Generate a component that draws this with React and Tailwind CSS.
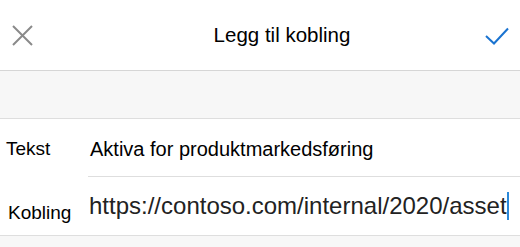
export default function App() {
  return (
    <div className="w-[520px] h-[247px] bg-[#f7f7f7] overflow-hidden" style={{ fontFamily: '"Liberation Sans", Arial, sans-serif' }}>
      <div className="h-[71px] bg-white flex items-center justify-between border-b border-[#d6d6d6] pl-[12px] pr-[11px]">
        <svg width="21" height="21" viewBox="0 0 21 21" className="mt-[1px]">
          <path d="M1 1L20 20M20 1L1 20" stroke="#8a8a8a" strokeWidth="2" fill="none" />
        </svg>
        <div className="text-[20.5px] text-black leading-none ml-[46px]">Legg til kobling</div>
        <svg width="24" height="18" viewBox="0 0 24 18" className="mt-[2px]">
          <path d="M1 9L9 16.5L23 1.5" stroke="#1a73d0" strokeWidth="2" fill="none" />
        </svg>
      </div>
      <div className="h-[47px]" />
      <div className="bg-white border-t border-b border-[#dedede]">
        <div className="flex h-[58px] items-center">
          <div className="w-[88px] pl-[6px] text-[19px] text-black pt-[2px]">Tekst</div>
          <div className="flex-1 h-full flex items-center border-b border-[#dedede] pl-[2px] text-[20px] text-black pt-[2px]">
            Aktiva for produktmarkedsføring
          </div>
        </div>
        <div className="flex h-[58px] items-center">
          <div className="w-[88px] pl-[8px] text-[19px] text-black pt-[14px]">Kobling</div>
          <div className="flex-1 flex items-center pl-[1px] text-[24px] text-[#222]">
            <span>https://contoso.com/internal/2020/asset</span>
            <span className="inline-block w-[2px] h-[28px] bg-[#2b88d8]" />
          </div>
        </div>
      </div>
    </div>
  );
}
